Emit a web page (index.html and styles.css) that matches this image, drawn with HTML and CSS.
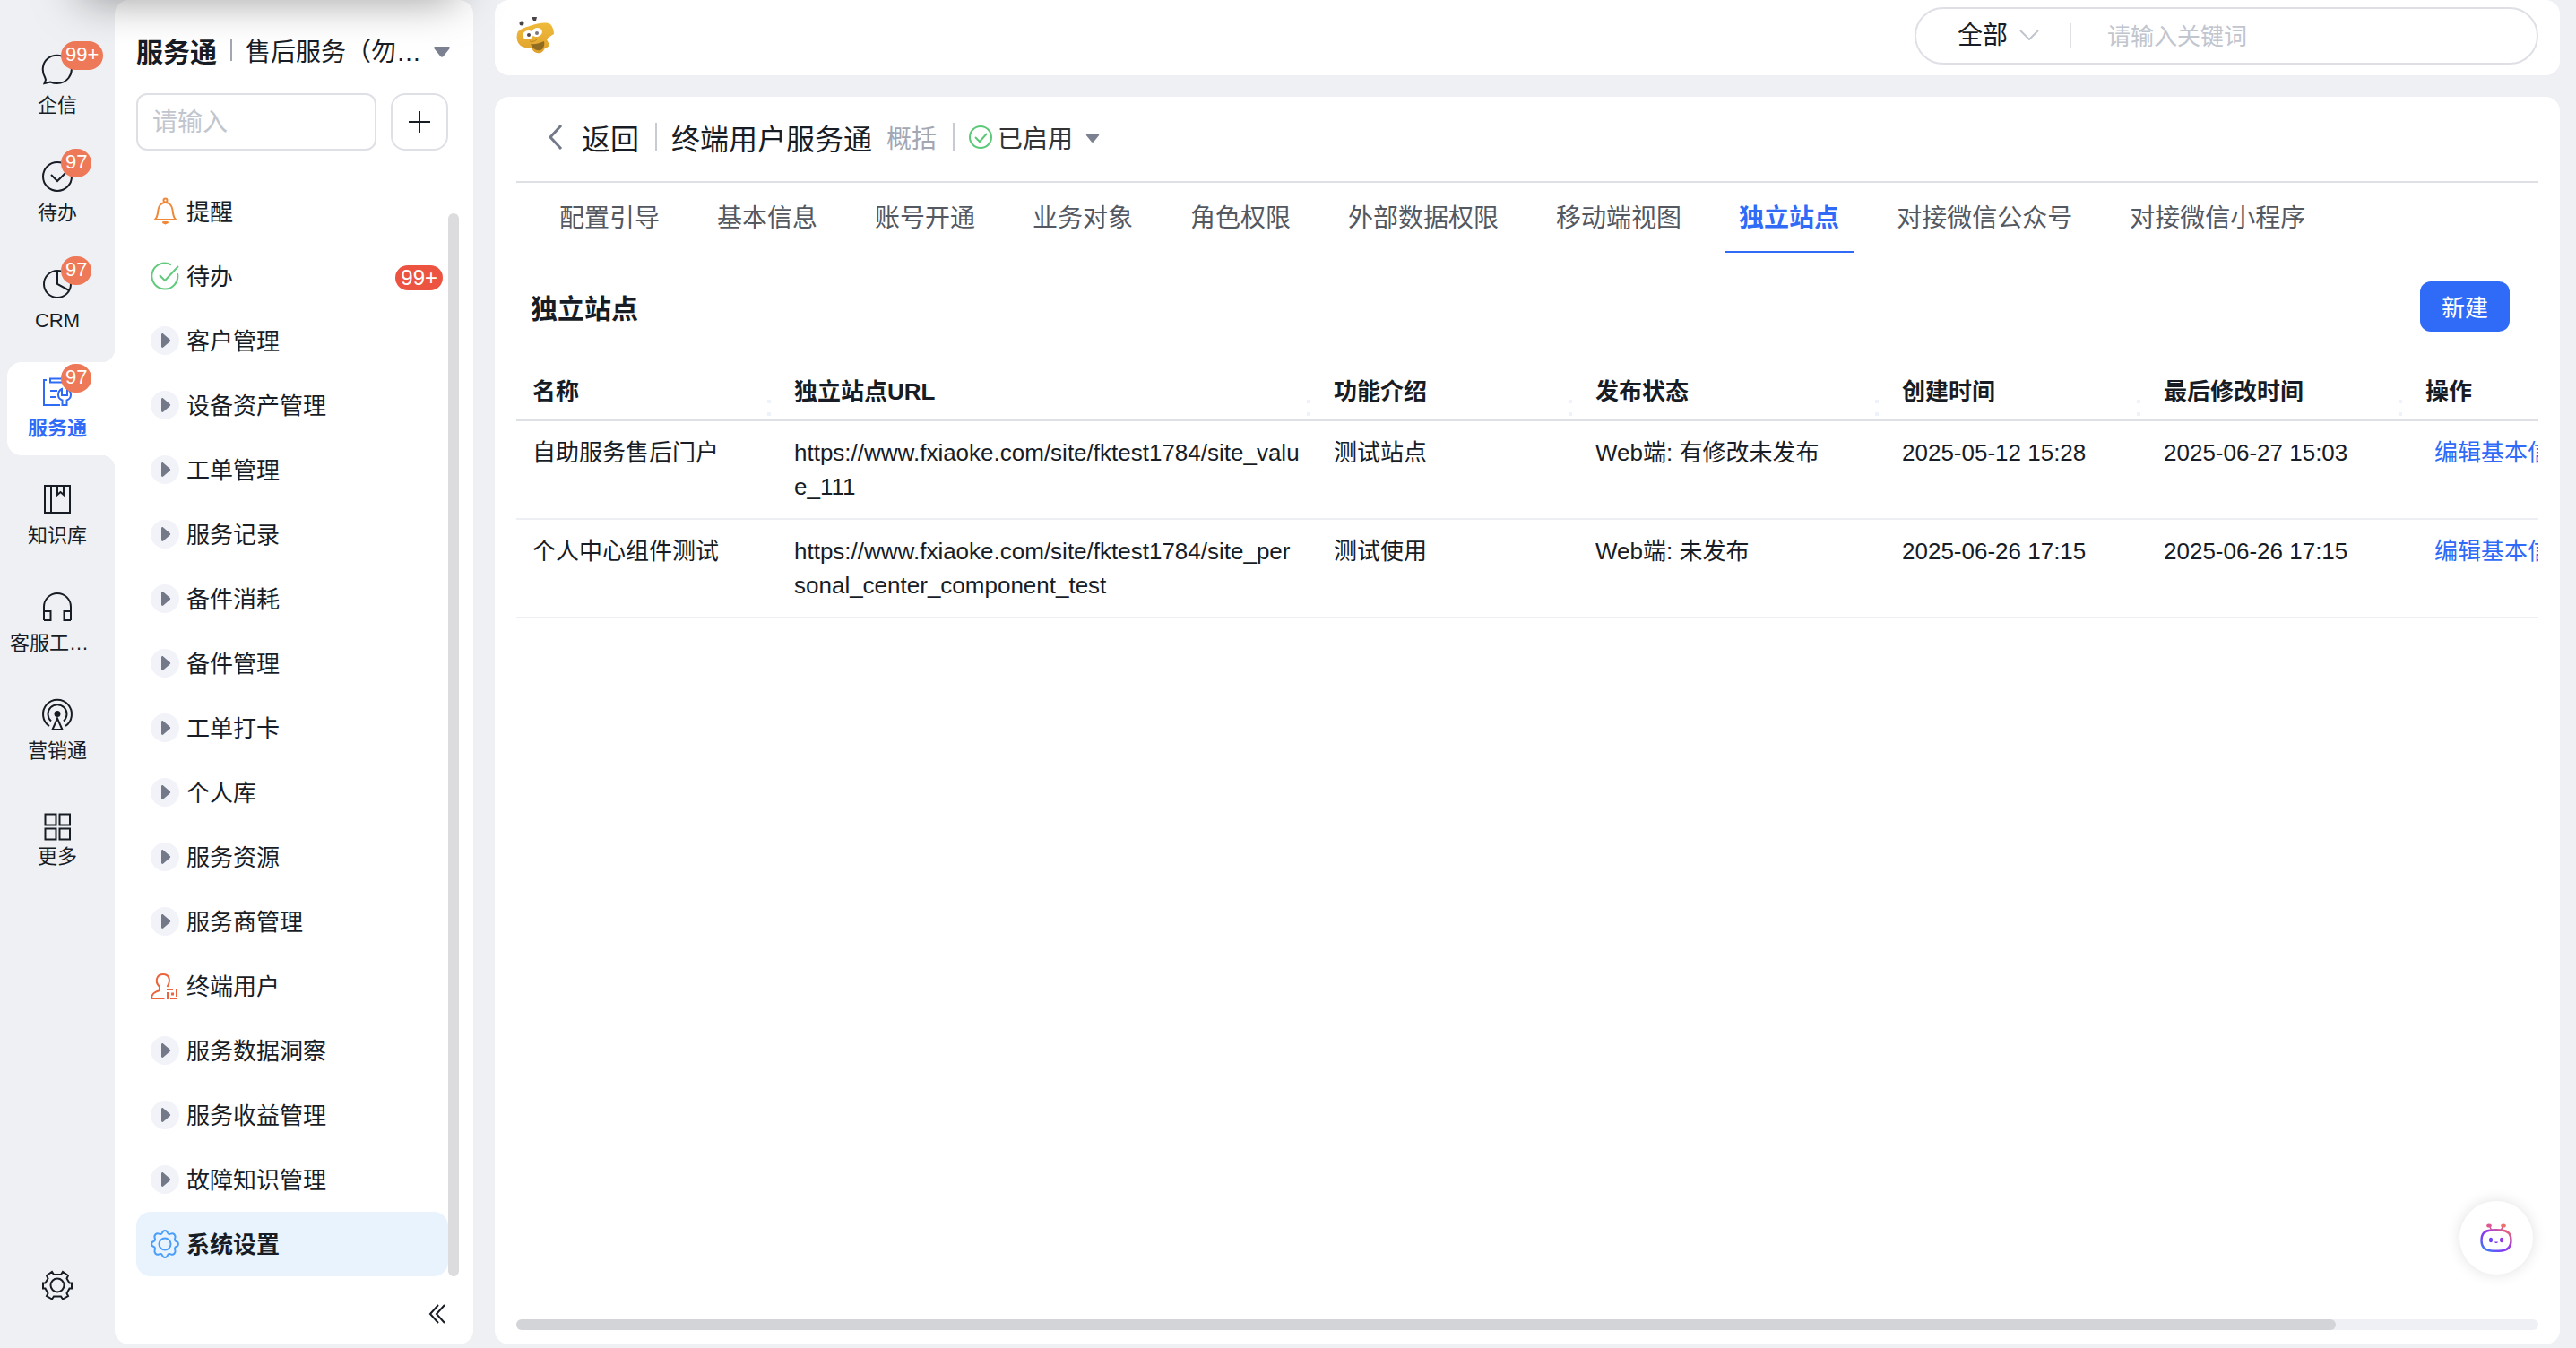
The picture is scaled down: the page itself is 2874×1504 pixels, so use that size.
FILE: index.html
```html
<!DOCTYPE html>
<html lang="zh-CN">
<head>
    <meta charset="UTF-8">
    <meta name="viewport" content="width=device-width, initial-scale=1.0">
    <title>服务通 - 独立站点</title>
    <link rel="stylesheet" href="styles.css">
</head>
<body>
    <svg class="sprite" aria-hidden="true">
        <symbol id="caret" viewBox="0 0 18 12">
            <path d="M1.500 0h15c1.300 0 1.800 1.400 1 2.300l-7 8.700c-.8 1-2.200 1-3 0L.5 2.300C-.3 1.400.2 0 1.500 0z" fill="#7b8190"/>
        </symbol>
        <symbol id="expand" viewBox="0 0 32 32">
            <circle cx="16" cy="16" r="16" fill="#f2f3f9"/>
            <path d="M12 9.500c0-1.300 1.300-1.900 2.200-1l7.500 6.500c.6.600.6 1.400 0 2l-7.500 6.500c-.9.900-2.200.3-2.200-1z" fill="#737988"/>
        </symbol>
    </svg>

    <div class="app">
        <nav class="rail">
            <a href="#" class="rail-item">
                <svg class="rail-icon" viewBox="0 0 36 36"><path d="M4 27C0 20 1.500 11 7 6.500c6-5 15.500-5 21.500.5 6.500 6 7 14.500 2 21-3.500 4.500-8.500 6-13 6-3 0-5-.6-7.500-1.500L3.500 34l1.500-4z"/></svg>
                <span class="rail-label">企信</span>
                <span class="rail-badge">99+</span>
            </a>
            <a href="#" class="rail-item">
                <svg class="rail-icon" viewBox="0 0 36 36"><circle cx="18" cy="18" r="16"/><path d="M11 16l7 7 9-9"/></svg>
                <span class="rail-label">待办</span>
                <span class="rail-badge">97</span>
            </a>
            <a href="#" class="rail-item">
                <svg class="rail-icon" viewBox="0 0 36 36"><circle cx="18" cy="18" r="15"/><path d="M18 3v15l13 7"/></svg>
                <span class="rail-label">CRM</span>
                <span class="rail-badge">97</span>
            </a>
            <a href="#" class="rail-item active">
                <svg class="rail-icon" viewBox="0 0 36 36"><path d="M6 5H3v28h18M10 3.500h20v4H10zM10 17h8M10 24h6M23 15c-3 1.500-4 4-4 6.500 0 3 1.500 5 4.500 6V33h5v-5.500c3-1 4.500-3 4.500-6 0-2.500-1-5-4-6.500v7h-6z"/></svg>
                <span class="rail-label">服务通</span>
                <span class="rail-badge">97</span>
            </a>
            <a href="#" class="rail-item">
                <svg class="rail-icon" viewBox="0 0 36 36"><path d="M4 3h28v30H4zM11 3v30M18 3v10l3.500-3 3.500 3V3"/></svg>
                <span class="rail-label">知识库</span>
            </a>
            <a href="#" class="rail-item">
                <svg class="rail-icon" viewBox="0 0 36 36"><path d="M3 33V18a15 15 0 0 1 30 0v15M3 23h7.500v10H3M33 23h-7.500v10H33"/></svg>
                <span class="rail-label">客服工作台</span>
            </a>
            <a href="#" class="rail-item">
                <svg class="rail-icon" viewBox="0 0 36 36"><path d="M9 31A16 16 0 1 1 27 31M11 25.500a10.500 10.500 0 1 1 14 0M18 22.500L12.500 35h11z"/><circle cx="18" cy="17.500" r="2.500" fill="currentColor"/></svg>
                <span class="rail-label">营销通</span>
            </a>
            <a href="#" class="rail-item rail-more">
                <svg class="rail-icon" viewBox="0 0 36 36"><path d="M4.500 4.500h12v12h-12zM20.500 4.500h11.500v12H20.500zM4.500 20.500h12v12h-12zM20.500 20.500h11.500v12H20.500z"/></svg>
                <span class="rail-label">更多</span>
            </a>
            <a href="#" class="rail-setting" aria-label="设置">
                <svg class="rail-icon" viewBox="0 0 36 36"><path d="M14 6h8l2-3 6 4-1.500 3.500 3 5H34v6h-2.500l-3 5.500L30 30l-6 3.500-2-3h-8l-2 3L6 30l1.500-3-3-5.500H2v-6h2.500l3-5L6 7l6-4z"/><circle cx="18" cy="18" r="7.500"/></svg>
            </a>
        </nav>

        <aside class="sidebar">
            <div class="sidebar-title">
                <strong>服务通</strong>
                <i class="line"></i>
                <span class="app-name">售后服务（勿动勿删）</span>
                <svg class="caret" viewBox="0 0 18 12"><use href="#caret"/></svg>
            </div>
            <div class="sidebar-search">
                <input type="text" placeholder="请输入" aria-label="搜索菜单">
                <button type="button" aria-label="新增">
                    <svg viewBox="0 0 24 24"><path d="M12 0v24M0 12h24"/></svg>
                </button>
            </div>
            <div class="menu-wrap">
                <ul class="menu">
                    <li><a href="#">
                        <svg viewBox="0 0 32 32" fill="none" stroke="#f0883a" stroke-width="2"><circle cx="16.500" cy="3.500" r="2"/><path d="M5 25h23c-3-3-3-7-3.500-11-.5-5-4-8-8-8s-7.500 3-8 8C8 18 8 22 5 25z"/><path d="M13.500 28h6l-3 1.500z" fill="#f0883a"/></svg>
                        <span>提醒</span></a></li>
                    <li><a href="#">
                        <svg viewBox="0 0 32 32" fill="none" stroke="#62c97d" stroke-width="2"><path d="M23 3.500A14.500 14.500 0 1 0 30 13M10 15l6 6L31 5"/></svg>
                        <span>待办</span><em class="menu-badge">99+</em></a></li>
                    <li><a href="#"><svg viewBox="0 0 32 32"><use href="#expand"/></svg><span>客户管理</span></a></li>
                    <li><a href="#"><svg viewBox="0 0 32 32"><use href="#expand"/></svg><span>设备资产管理</span></a></li>
                    <li><a href="#"><svg viewBox="0 0 32 32"><use href="#expand"/></svg><span>工单管理</span></a></li>
                    <li><a href="#"><svg viewBox="0 0 32 32"><use href="#expand"/></svg><span>服务记录</span></a></li>
                    <li><a href="#"><svg viewBox="0 0 32 32"><use href="#expand"/></svg><span>备件消耗</span></a></li>
                    <li><a href="#"><svg viewBox="0 0 32 32"><use href="#expand"/></svg><span>备件管理</span></a></li>
                    <li><a href="#"><svg viewBox="0 0 32 32"><use href="#expand"/></svg><span>工单打卡</span></a></li>
                    <li><a href="#"><svg viewBox="0 0 32 32"><use href="#expand"/></svg><span>个人库</span></a></li>
                    <li><a href="#"><svg viewBox="0 0 32 32"><use href="#expand"/></svg><span>服务资源</span></a></li>
                    <li><a href="#"><svg viewBox="0 0 32 32"><use href="#expand"/></svg><span>服务商管理</span></a></li>
                    <li><a href="#">
                        <svg viewBox="0 0 32 32" fill="none" stroke="#ec643c" stroke-width="2"><path d="M15.500 30H1c0-5 3-7 9-9v-4C4 11 7 3 14 3s9 7 4.500 14M18 20h7M29 19v9M19 23v8M22 30h8"/><path d="M23 25h3" stroke-width="3"/></svg>
                        <span>终端用户</span></a></li>
                    <li><a href="#"><svg viewBox="0 0 32 32"><use href="#expand"/></svg><span>服务数据洞察</span></a></li>
                    <li><a href="#"><svg viewBox="0 0 32 32"><use href="#expand"/></svg><span>服务收益管理</span></a></li>
                    <li><a href="#"><svg viewBox="0 0 32 32"><use href="#expand"/></svg><span>故障知识管理</span></a></li>
                    <li class="active"><a href="#">
                        <svg viewBox="0 0 32 32" fill="none" stroke="#4a9df8" stroke-width="2"><path d="M13 3.500C14 .3 18 .3 19 3.500c.6 1.600 2.200 1.800 3.500 1.200 3-1.500 6 1.500 4.800 4.800-.6 1.300-.4 2.900 1.200 3.500 3.200 1 3.200 5 0 6-1.600.6-1.800 2.200-1.200 3.500 1.200 3.300-1.800 6.300-4.800 4.800-1.300-.6-2.900-.4-3.500 1.200-1 3.200-5 3.200-6 0-.6-1.600-2.200-1.800-3.500-1.200-3 1.500-6-1.500-4.800-4.800.6-1.300.4-2.900-1.200-3.500-3.200-1-3.200-5 0-6 1.600-.6 1.800-2.200 1.200-3.500C3.500 6.200 6.500 3.200 9.500 4.700c1.300.6 2.900.4 3.500-1.200z"/><circle cx="16" cy="16" r="6.500"/></svg>
                        <span>系统设置</span></a></li>
                </ul>
                <div class="menu-scroll"></div>
            </div>
            <button type="button" class="collapse" aria-label="收起">
                <svg viewBox="0 0 18 20"><path d="M10 0L1 10l9 10M17 0L8 10l9 10"/></svg>
            </button>
        </aside>

        <div class="content">
            <header class="topbar">
                <svg class="logo" viewBox="0 0 42 42">
                    <defs>
                        <linearGradient id="bee" x1="0" y1="0" x2="0" y2="1">
                            <stop offset="0" stop-color="#efbb3c"/>
                            <stop offset="1" stop-color="#e0a12c"/>
                        </linearGradient>
                    </defs>
                    <circle cx="6" cy="7" r="2.500" fill="#4a4348"/>
                    <path d="M17 0h6l-1 4h-3z" fill="#4a4348"/>
                    <path d="M2 16c5-4 10-5 16-7 7-2 15-4 20-1 3 3 4 8 4 11-3 2-6 3-8 6 1 2 2 4 3 6-1 3-4 3-6 5-1 3-4 5-8 4-4-1-5-4-7-6-5 1-10 0-13-4-3-4-3-10-1-14z" fill="url(#bee)"/>
                    <path d="M16 30c5 1 10-1 15-3 1 5-1 9-4 10-5 1-9-2-11-7z" fill="#8f6c22"/>
                    <ellipse cx="13" cy="20" rx="6" ry="5" fill="#fff" transform="rotate(-15 13 20)"/>
                    <ellipse cx="23" cy="17" rx="6" ry="5" fill="#fff" transform="rotate(-15 23 17)"/>
                    <circle cx="14" cy="20" r="2" fill="#54484a"/>
                    <circle cx="23" cy="18" r="2" fill="#7d757c"/>
                    <path d="M15 27c3 1 6 0 9-3" fill="none" stroke="#b9821f"/>
                </svg>
                <form class="search">
                    <button type="button" class="search-type">全部
                        <svg viewBox="0 0 22 12"><path d="M1 1l10 10L21 1"/></svg>
                    </button>
                    <i class="line"></i>
                    <input type="text" placeholder="请输入关键词" aria-label="关键词">
                </form>
            </header>

            <main class="main">
                <div class="page-head">
                    <a href="#" class="back"><svg viewBox="0 0 16 28"><path d="M14 1L2 14l12 13"/></svg>返回</a>
                    <i class="line"></i>
                    <h1>终端用户服务通</h1>
                    <span class="sub">概括</span>
                    <i class="line"></i>
                    <button type="button" class="status">
                        <svg class="status-icon" viewBox="0 0 26 26"><circle cx="13" cy="13" r="12"/><path d="M7 13l5 5 8-9"/></svg>
                        已启用
                        <svg class="status-caret" viewBox="0 0 18 12"><use href="#caret"/></svg>
                    </button>
                </div>

                <nav class="tabs">
                    <a href="#">配置引导</a>
                    <a href="#">基本信息</a>
                    <a href="#">账号开通</a>
                    <a href="#">业务对象</a>
                    <a href="#">角色权限</a>
                    <a href="#">外部数据权限</a>
                    <a href="#">移动端视图</a>
                    <a href="#" class="active">独立站点</a>
                    <a href="#">对接微信公众号</a>
                    <a href="#">对接微信小程序</a>
                </nav>

                <div class="section-head">
                    <h2>独立站点</h2>
                    <button type="button" class="btn-primary">新建</button>
                </div>

                <div class="table-wrap">
                    <table>
                        <colgroup>
                            <col class="col-s">
                            <col class="col-url">
                            <col class="col-s">
                            <col class="col-status">
                            <col class="col-s">
                            <col class="col-s">
                            <col>
                        </colgroup>
                        <thead>
                            <tr>
                                <th>名称</th>
                                <th>独立站点URL</th>
                                <th>功能介绍</th>
                                <th>发布状态</th>
                                <th>创建时间</th>
                                <th>最后修改时间</th>
                                <th>操作</th>
                            </tr>
                        </thead>
                        <tbody>
                            <tr>
                                <td>自助服务售后门户</td>
                                <td>https://www.fxiaoke.com/site/fktest1784/site_value_111</td>
                                <td>测试站点</td>
                                <td>Web端: 有修改未发布</td>
                                <td>2025-05-12 15:28</td>
                                <td>2025-06-27 15:03</td>
                                <td><a href="#">编辑基本信息</a></td>
                            </tr>
                            <tr>
                                <td>个人中心组件测试</td>
                                <td>https://www.fxiaoke.com/site/fktest1784/site_personal_center_component_test</td>
                                <td>测试使用</td>
                                <td>Web端: 未发布</td>
                                <td>2025-06-26 17:15</td>
                                <td>2025-06-26 17:15</td>
                                <td><a href="#">编辑基本信息</a></td>
                            </tr>
                        </tbody>
                    </table>
                </div>
                <div class="table-scroll"><div class="thumb"></div></div>
            </main>
        </div>
    </div>

    <div class="window-shadow"></div>

    <button type="button" class="assistant" aria-label="智能助手">
        <svg viewBox="0 0 36 32">
            <defs>
                <linearGradient id="bot" x1="0" y1="1" x2="1" y2="0">
                    <stop offset="0" stop-color="#2f8df5"/>
                    <stop offset=".35" stop-color="#7a3ff2"/>
                    <stop offset=".6" stop-color="#a13ae0"/>
                    <stop offset="1" stop-color="#f4735a"/>
                </linearGradient>
            </defs>
            <path d="M12 7.500c6-.5 6-.5 12 0 7 .5 10.500 4 10.500 11.500S31 30 24 30.500c-6 .5-6 .5-12 0C5 30 1.500 26.500 1.500 19S5 8 12 7.500z" fill="none" stroke="url(#bot)" stroke-width="2.400"/>
            <path d="M12.500 7l-2-4M23.500 7l2-4" fill="none" stroke="#d9529a" stroke-width="1.500"/>
            <ellipse cx="10" cy="2.500" rx="2.800" ry="2" fill="#df5690"/>
            <ellipse cx="26" cy="2.500" rx="2.800" ry="2" fill="#ef6f6b"/>
            <ellipse cx="12" cy="18.500" rx="2" ry="2.800" fill="#6f43f2"/>
            <ellipse cx="24" cy="18.500" rx="2" ry="2.800" fill="#953be6"/>
            <path d="M16 20.500h4c-.5 2-3.500 2-4 0z" fill="#8a3eee"/>
        </svg>
    </button>
</body>
</html>
```
FILE: styles.css
```css
* {
    box-sizing: border-box;
}
body {
    margin: 0;
    background: #eff0f3;
    color: #181c25;
    font-family: "Liberation Sans", "Noto Sans CJK SC", sans-serif;
    font-size: 26px;
    overflow: hidden;
}
a {
    color: inherit;
    text-decoration: none;
}
button, input {
    font: inherit;
    color: inherit;
    padding: 0;
    border: 0;
    background: none;
    outline: none;
}
button {
    cursor: pointer;
}
svg {
    flex: none;
    display: block;
}
.sprite {
    position: absolute;
    width: 0;
    height: 0;
}
.app {
    display: flex;
    height: 100vh;
    padding: 0 18px 4px 0;
}
.line {
    flex: none;
    width: 2px;
    background: #c9cbd3;
}

/* left rail */
.rail {
    flex: none;
    width: 128px;
    padding: 44px 0 32px 8px;
    display: flex;
    flex-direction: column;
}
.rail-item {
    position: relative;
    height: 104px;
    margin-bottom: 16px;
    padding: 15px 8px 0 0;
    display: flex;
    flex-direction: column;
    align-items: center;
    gap: 7px;
}
.rail-icon {
    width: 36px;
    height: 36px;
    fill: none;
    stroke: currentColor;
    stroke-width: 2;
}
.rail-label {
    max-width: 106px;
    font-size: 22px;
    line-height: 32px;
    white-space: nowrap;
    overflow: hidden;
    text-overflow: ellipsis;
}
.rail-more {
    gap: 0;
    padding-top: 20px;
}
.rail-badge {
    position: absolute;
    top: 2px;
    left: 60px;
    height: 32px;
    padding: 0 5px;
    border-radius: 16px;
    background: #ee7958;
    color: #fff;
    font-size: 22px;
    line-height: 30px;
}
.rail-item.active {
    background: #fff;
    border-radius: 16px 0 0 16px;
    color: #2f6bf7;
    font-weight: bold;
}
.rail-item.active .rail-badge {
    font-weight: normal;
}
.rail-item.active::before, .rail-item.active::after {
    content: "";
    position: absolute;
    right: 0;
    width: 14px;
    height: 14px;
}
.rail-item.active::before {
    top: -14px;
    background: radial-gradient(circle at 0 0, #eff0f3 14px, #fff 14px);
}
.rail-item.active::after {
    bottom: -14px;
    background: radial-gradient(circle at 0 100%, #eff0f3 14px, #fff 14px);
}
.rail-setting {
    margin-top: auto;
    padding: 0 8px 16px 0;
    display: flex;
    justify-content: center;
}

/* menu panel */
.sidebar {
    flex: none;
    width: 400px;
    margin-right: 24px;
    padding: 36px 16px 24px 24px;
    display: flex;
    flex-direction: column;
    background: #fff;
    border-radius: 16px;
}
.sidebar-title {
    display: flex;
    align-items: center;
    height: 40px;
    padding-right: 10px;
    font-size: 28px;
}
.sidebar-title strong {
    font-size: 30px;
}
.sidebar-title .line {
    height: 24px;
    margin: 0 15px;
    background: #a3a7b3;
}
.app-name {
    width: 198px;
    white-space: nowrap;
    overflow: hidden;
    text-overflow: ellipsis;
}
.caret {
    width: 18px;
    height: 12px;
    margin: 4px 0 0 auto;
}
.sidebar-search {
    display: flex;
    gap: 16px;
    padding-right: 12px;
    margin-top: 28px;
}
.sidebar-search input {
    flex: 1;
    min-width: 0;
    height: 64px;
    padding: 2px 16px 0;
    border: 2px solid #dee0e6;
    border-radius: 12px;
    font-size: 28px;
}
input::placeholder {
    color: #c1c5ce;
    opacity: 1;
}
.sidebar-search button {
    width: 64px;
    height: 64px;
    display: flex;
    align-items: center;
    justify-content: center;
    border: 2px solid #dee0e6;
    border-radius: 16px;
}
.sidebar-search svg, .collapse svg {
    width: 24px;
    height: 24px;
    fill: none;
    stroke: #181c25;
    stroke-width: 2;
}
.menu-wrap {
    display: flex;
    margin-top: 32px;
}
.menu {
    flex: 1;
    margin: 0;
    padding: 0;
    list-style: none;
}
.menu a {
    display: flex;
    align-items: center;
    gap: 8px;
    height: 72px;
    padding: 0 6px 0 16px;
    border-radius: 16px;
}
.menu span {
    padding-bottom: 4px;
}
.menu svg {
    width: 32px;
    height: 32px;
}
.menu .active a {
    background: #e8f3fe;
    font-weight: bold;
}
.menu-badge {
    height: 28px;
    margin: 4px 0 0 auto;
    padding: 0 6px;
    border-radius: 14px;
    background: #ec5340;
    color: #fff;
    font-size: 24px;
    font-style: normal;
    line-height: 28px;
}
.menu-scroll {
    width: 12px;
    margin-top: 38px;
    border-radius: 6px;
    background: #dcdcde;
}
.collapse {
    margin: auto 15px 0 auto;
}
.collapse svg {
    width: 18px;
    height: 20px;
    overflow: visible;
}

/* right side */
.content {
    flex: 1;
    min-width: 0;
    display: flex;
    flex-direction: column;
    gap: 24px;
}
.topbar {
    display: flex;
    align-items: center;
    justify-content: space-between;
    height: 84px;
    padding: 0 24px 4px;
    background: #fff;
    border-radius: 16px;
}
.logo {
    width: 42px;
    height: 42px;
}
.search {
    display: flex;
    align-items: center;
    width: 696px;
    height: 64px;
    padding: 0 46px;
    border: 2px solid #dee0e6;
    border-radius: 32px;
}
.search-type {
    display: flex;
    align-items: center;
    gap: 13px;
    padding-bottom: 6px;
    font-size: 28px;
}
.search-type svg {
    width: 22px;
    height: 12px;
    margin-top: 4px;
    fill: none;
    stroke: #c1c5ce;
    stroke-width: 2;
}
.search .line {
    height: 28px;
    margin: 0 40px 0 34px;
    background: #dee0e6;
}
.search input {
    flex: 1;
    min-width: 0;
    padding-top: 2px;
}
.main {
    flex: 1;
    min-height: 0;
    display: flex;
    flex-direction: column;
    padding: 0 24px 16px;
    background: #fff;
    border-radius: 16px;
}
.page-head {
    display: flex;
    align-items: center;
    height: 96px;
    padding: 0 36px 4px;
    border-bottom: 2px solid #dee0e6;
    font-size: 28px;
}
.back {
    display: flex;
    align-items: center;
    gap: 21px;
    font-size: 32px;
}
.back svg {
    width: 16px;
    height: 28px;
    fill: none;
    stroke: #737988;
    stroke-width: 3;
}
.page-head .line {
    height: 32px;
    margin: 0 16px 0 18px;
}
h1, h2 {
    margin: 0;
    font-size: 32px;
    font-weight: normal;
}
.sub {
    margin-left: 16px;
    color: #a3a7b3;
}
.status {
    display: flex;
    align-items: center;
    gap: 6px;
    color: #333;
}
.status-icon {
    width: 26px;
    height: 26px;
    fill: none;
    stroke: #5bc878;
    stroke-width: 2;
}
.status-caret {
    width: 16px;
    height: 10px;
    margin: 2px 0 0 8px;
}
.tabs {
    display: flex;
    gap: 32px;
    padding-left: 32px;
    font-size: 28px;
    color: #545861;
}
.tabs a {
    height: 78px;
    padding: 0 16px;
    line-height: 80px;
    white-space: nowrap;
}
.tabs .active {
    border-bottom: 2px solid #2f6bf7;
    color: #2f6bf7;
    font-weight: bold;
}
.section-head {
    display: flex;
    align-items: center;
    justify-content: space-between;
    padding: 32px 32px 34px 16px;
}
h2 {
    font-size: 30px;
    font-weight: bold;
}
.btn-primary {
    width: 100px;
    height: 56px;
    padding-bottom: 2px;
    border-radius: 12px;
    background: #2f6bf7;
    color: #fff;
}
.table-wrap {
    flex: 1;
    overflow: hidden;
}
table {
    width: 2512px;
    table-layout: fixed;
    border-collapse: separate;
    border-spacing: 0;
    line-height: 38px;
}
.col-s {
    width: 292px;
}
.col-url {
    width: 602px;
}
.col-status {
    width: 342px;
}
th, td {
    padding: 16px 18px;
    text-align: left;
    vertical-align: top;
    border-bottom: 2px solid #eeeff4;
    word-break: break-all;
}
th {
    position: relative;
    padding: 14px 18px 12px;
    border-bottom-color: #dee0e6;
}
/* column resize handle */
th::after {
    content: "";
    position: absolute;
    right: 8px;
    bottom: 4px;
    width: 4px;
    height: 18px;
    background: linear-gradient(#edf2fb 4px, transparent 4px, transparent 14px, #edf2fb 14px);
}
td a {
    margin-left: 10px;
    color: #2f6bf7;
}
.table-scroll {
    height: 12px;
    border-radius: 6px;
    background: #eff0f5;
}
.thumb {
    width: 90%;
    height: 12px;
    border-radius: 6px;
    background: #d3d4d8;
}

/* floating items */
.window-shadow {
    position: absolute;
    top: -40px;
    left: 90px;
    width: 420px;
    height: 36px;
    box-shadow: 0 0 50px rgba(0, 0, 0, .5);
    pointer-events: none;
}
.assistant {
    position: fixed;
    right: 48px;
    bottom: 82px;
    width: 82px;
    height: 82px;
    display: flex;
    align-items: center;
    justify-content: center;
    border-radius: 50%;
    background: #fff;
    box-shadow: 0 0 16px rgba(0, 0, 0, .12);
}
.assistant svg {
    width: 36px;
    height: 32px;
    overflow: visible;
}
```
